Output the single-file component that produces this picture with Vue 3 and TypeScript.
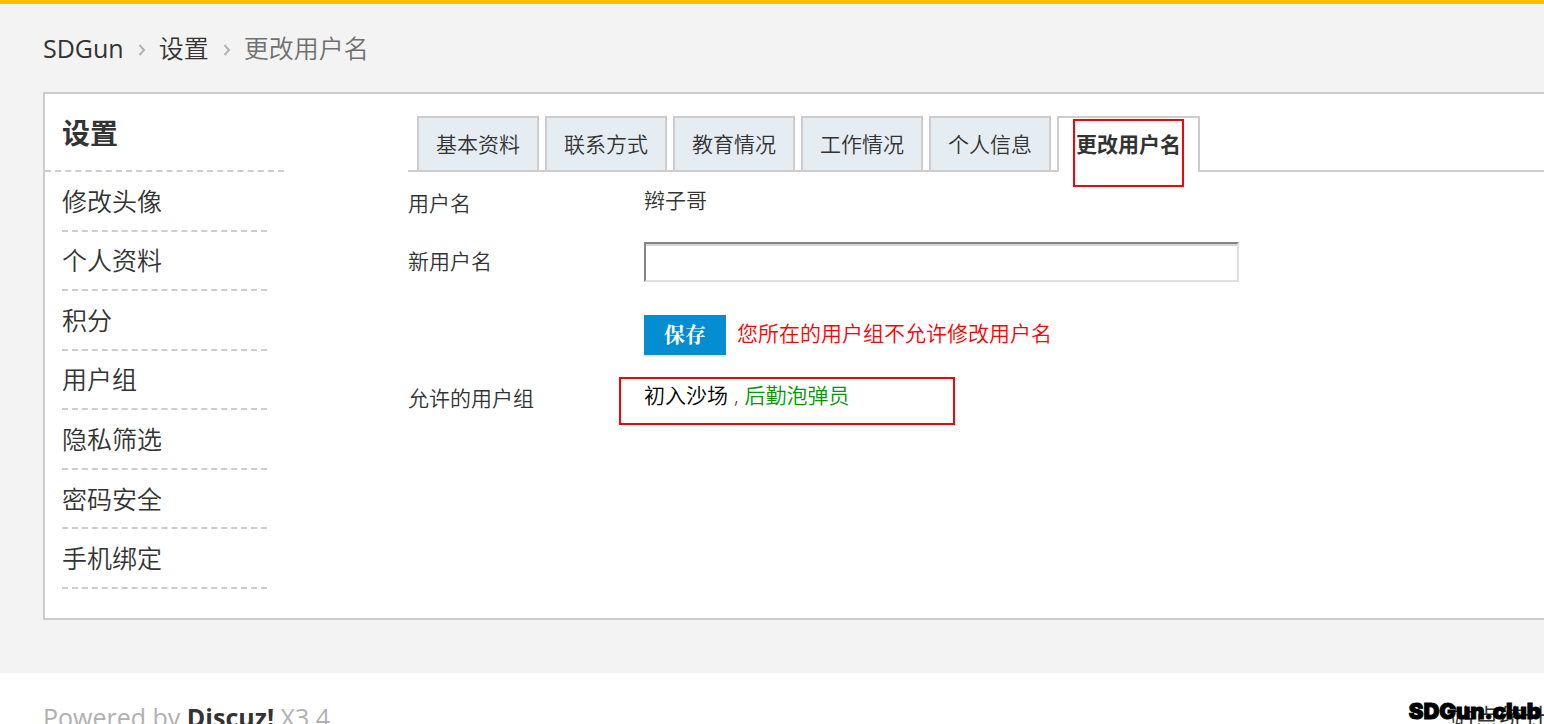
<script setup lang="ts">
import { ref } from 'vue'

const menu: string[] = ['修改头像', '个人资料', '积分', '用户组', '隐私筛选', '密码安全', '手机绑定']
const tabs: string[] = ['基本资料', '联系方式', '教育情况', '工作情况', '个人信息', '更改用户名']
const active = ref(5)
const newName = ref('')
</script>

<template>
  <div class="page">
    <nav class="crumbs">
      <a href="#">SDGun</a>
      <svg class="chevron" viewBox="0 0 8 12" aria-hidden="true"><path d="M1.5 1 L6 6 L1.5 11" /></svg>
      <a href="#">设置</a>
      <svg class="chevron" viewBox="0 0 8 12" aria-hidden="true"><path d="M1.5 1 L6 6 L1.5 11" /></svg>
      <span>更改用户名</span>
    </nav>

    <div class="panel">
      <aside class="side">
        <h2>设置</h2>
        <ul>
          <li v-for="item in menu" :key="item"><a href="#">{{ item }}</a></li>
        </ul>
      </aside>

      <main class="main">
        <nav class="tabs">
          <a
            v-for="(tab, i) in tabs"
            :key="tab"
            href="#"
            class="tab"
            :class="{ active: i === active }"
            @click.prevent="active = i"
          >{{ tab }}<i v-if="i === active" class="mark mark-tab"></i></a>
        </nav>

        <form class="form" @submit.prevent>
          <span class="label">用户名</span>
          <span class="value">辫子哥</span>
          <label class="label" for="newname">新用户名</label>
          <input id="newname" v-model="newName" type="text" />
          <div class="save">
            <button type="submit">保存</button>
            <span class="warn">您所在的用户组不允许修改用户名</span>
          </div>
          <span class="label">允许的用户组</span>
          <span class="value groups"><span class="black">初入沙场</span><span class="comma">,</span><span class="green">后勤泡弹员</span><i class="mark mark-groups"></i></span>
        </form>
      </main>
    </div>

    <footer class="footer">
      <p>Powered by <a href="#">Discuz!</a> X3.4</p>
      <a class="stats" href="#">站点统计</a>
      <span class="watermark">SDGun.club</span>
    </footer>
  </div>
</template>

<style>
body {
  margin: 0;
  background: #f3f3f3;
}
</style>

<style scoped>
.page {
  box-sizing: border-box;
  height: 100vh;
  overflow: hidden;
  border-top: 4px solid #ffc000;
  background: #f3f3f3;
  color: #333;
  font-family: "Open Sans", "Noto Sans CJK SC", sans-serif;
  font-size: 21px;
  font-weight: 350;
  line-height: 32px;
}
a {
  color: inherit;
  text-decoration: none;
}
.crumbs {
  display: flex;
  align-items: center;
  height: 88px;
  padding-left: 43px;
  font-size: 25px;
  color: #707070;
}
.crumbs a {
  color: #333;
}
.crumbs a:first-child {
  font-weight: 400;
}
.chevron {
  width: 8px;
  height: 12px;
  margin: 4px 13px 0 14px;
  fill: none;
  stroke: #b3b3b3;
  stroke-width: 2;
}
.panel {
  display: flex;
  margin-left: 43px;
  padding-bottom: 29px;
  border: 2px solid #cdcdcd;
  border-right: 0;
  background: #fff;
}
.side {
  flex: 0 0 239px;
  margin-right: 124px;
}
.side h2 {
  box-sizing: border-box;
  height: 78px;
  margin: 0;
  padding: 23px 17px 0;
  border-bottom: 2px dashed #cdcdcd;
  font-size: 28px;
  font-weight: 700;
}
.side ul {
  display: grid;
  grid-auto-rows: 1fr;
  min-height: 417px;
  margin: 0;
  padding: 0 17px;
  list-style: none;
  font-size: 25px;
}
.side li {
  display: flex;
  align-items: center;
  border-bottom: 2px dashed #cdcdcd;
}
.main {
  flex: 1;
  min-width: 0;
}
.tabs {
  display: flex;
  gap: 6px;
  margin-top: 22px;
  padding-left: 9px;
  border-bottom: 2px solid #cdcdcd;
}
.tab {
  position: relative;
  height: 52px;
  padding: 0 17px;
  border: 2px solid #cdcdcd;
  border-bottom: 0;
  background: #e5edf2;
  line-height: 52px;
  white-space: nowrap;
}
.tab.active {
  margin-bottom: -2px;
  padding-bottom: 2px;
  background: #fff;
  font-weight: 700;
}
.mark {
  position: absolute;
  box-sizing: border-box;
  border: 2px solid #f00;
  pointer-events: none;
}
.mark-tab {
  top: 1px;
  left: 14px;
  width: 111px;
  height: 68px;
}
.mark-groups {
  top: -2px;
  left: -25px;
  width: 336px;
  height: 48px;
}
.form {
  display: grid;
  grid-template-columns: 236px minmax(0, 1fr);
  grid-template-rows: 58px 73px 64px auto;
  align-items: start;
  padding-top: 12px;
}
.label {
  padding-top: 3px;
}
.form input {
  box-sizing: border-box;
  width: 100%;
  max-width: 595px;
  height: 40px;
  padding: 0 6px;
  border: 2px solid;
  border-color: #848484 #e0e0e0 #e0e0e0 #848484;
  border-radius: 0;
  outline: 0;
  background: #fff;
  box-shadow: inset 0 2px 0 #d5d5d5;
  font: inherit;
}
.save {
  display: flex;
  grid-column: 2;
  align-items: center;
  gap: 11px;
}
.save button {
  width: 82px;
  height: 40px;
  padding: 0;
  border: 0;
  background: #048dd1;
  box-shadow: 0 2px 0 #e8e8e8;
  color: #fff;
  font: 700 21px/40px "Liberation Serif", "Noto Serif CJK SC", "Noto Sans CJK SC", serif;
}
.warn {
  padding-bottom: 4px;
  color: #f00;
}
.groups {
  position: relative;
}
.black {
  color: #000;
}
.comma {
  padding: 0 6px;
}
.green {
  color: #090;
}
.footer {
  position: relative;
  display: flex;
  justify-content: space-between;
  margin-top: 53px;
  padding: 28px 0 40px 43px;
  background: #fff;
  color: #b0b0b0;
  font-size: 25px;
}
.footer p {
  margin: 0;
  font-weight: 400;
}
.footer a {
  color: #333;
}
.footer p a {
  font-weight: 700;
}
.footer .stats {
  margin-right: -5px;
}
.watermark {
  position: absolute;
  top: 22px;
  right: 3px;
  color: #000;
  font: 900 22px/32px Inter, sans-serif;
  -webkit-text-stroke: 1px #000;
}
</style>
